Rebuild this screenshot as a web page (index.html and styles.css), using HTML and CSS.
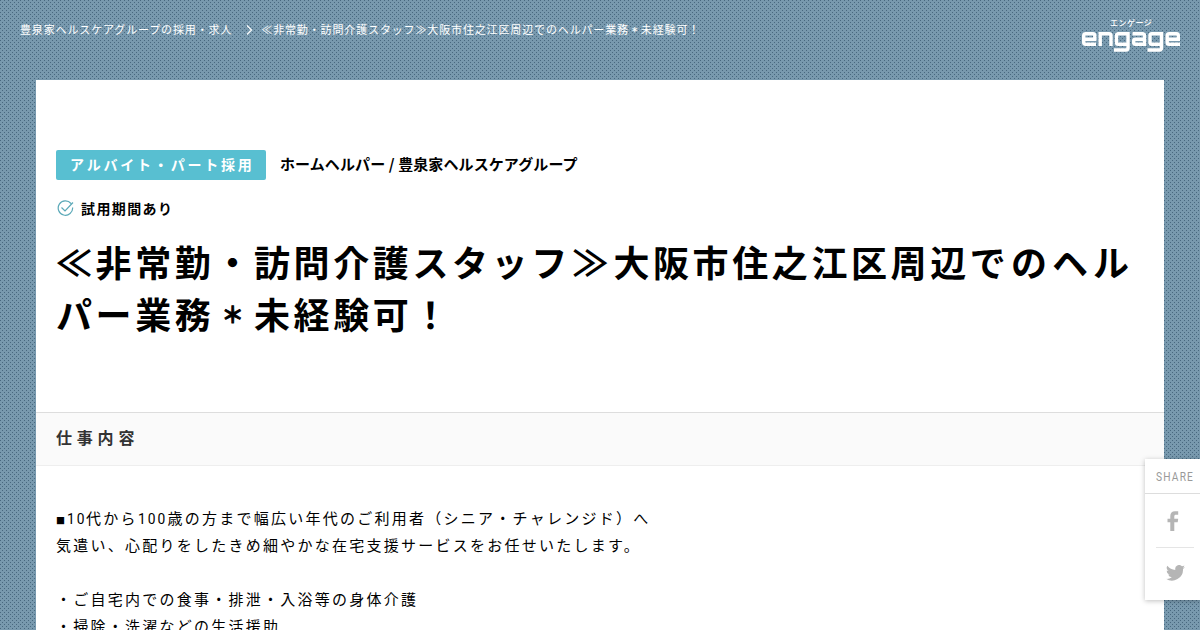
FILE: index.html
```
<!DOCTYPE html>
<html lang="ja">
<head>
  <meta charset="UTF-8">
  <title>≪非常勤・訪問介護スタッフ≫大阪市住之江区周辺でのヘルパー業務＊未経験可！</title>
  <link rel="stylesheet" href="styles.css">
</head>
<body>
  <header class="header">
    <ul class="breadcrumb">
      <li>豊泉家ヘルスケアグループの採用・求人</li>
      <li class="arrow"><svg width="7" height="10" viewBox="0 0 7 10"><path d="M1 .5L5.500 5L1 9.500"/></svg></li>
      <li>≪非常勤・訪問介護スタッフ≫大阪市住之江区周辺でのヘルパー業務<span class="ast">＊</span>未経験可！</li>
    </ul>
    <div class="logo">
      <span class="ruby">エンゲージ</span>
      <svg width="98" height="20" viewBox="0 0 98 20" role="img" aria-label="engage">
        <path d="M14 12.300H3.500Q1.700 12.300 1.700 10.500V3.500Q1.700 1.700 3.500 1.700H11Q12.800 1.700 12.800 3.500V7.300H1.700"/>
        <path d="M18.200 14V1.700H27Q29 1.700 29 3.700V14"/>
        <path d="M46 12.300H36.300Q34.500 12.300 34.500 10.500V3.500Q34.500 1.700 36.300 1.700H46V16Q46 18 44 18H32"/>
        <path d="M50.500 1.700H60.500Q62.500 1.700 62.500 3.500V12.300H53.500Q51.700 12.300 51.700 10.800V8.800Q51.700 7.300 53.500 7.300H62.500"/>
        <path d="M79.500 12.300H69.800Q68 12.300 68 10.500V3.500Q68 1.700 69.800 1.700H79.500V16Q79.500 18 77.500 18H65.500"/>
        <path d="M98 12.300H87Q85.200 12.300 85.200 10.500V3.500Q85.200 1.700 87 1.700H94.500Q96.300 1.700 96.300 3.500V7.300H85.200"/>
      </svg>
    </div>
  </header>
  <main class="content">
    <div class="job-head">
      <div class="job-type">
        <span class="label">アルバイト・パート採用</span>
        <span class="job-name">ホームヘルパー / 豊泉家ヘルスケアグループ</span>
      </div>
      <p class="trial">
        <svg width="17" height="17" viewBox="0 0 17 17"><path d="M14 3.500A7.200 7.200 0 1 0 15.600 7.500M4.500 7.500L8 11L16 2.500"/></svg>
        試用期間あり
      </p>
      <h1>≪非常勤・訪問介護スタッ<span class="wide">フ≫</span>大阪市住之江区周辺<span class="wide">でのヘル</span>パー業務<span class="ast">＊</span>未経験可！</h1>
    </div>
    <h2>仕事内容</h2>
    <p class="text"><span class="mark">■</span><span class="num">10</span>代から<span class="num">100</span>歳の方まで幅広い年代のご利用者（シニア・チャレンジド）へ<br>
    気遣い、心配りをしたきめ細やかな在宅支援サービスをお任せいたします。<br>
    <br>
    ・ご自宅内での食事・排泄・入浴等の身体介護<br>
    ・掃除・洗濯などの生活援助</p>
  </main>
  <aside class="share">
    <p class="share-title"><span>SHARE</span></p>
    <ul>
      <li class="facebook"><svg width="12" height="20" viewBox="0 0 12 20"><path d="M3.300 20V11.200H.5V7.700H3.300V5C3.300 1.900 5 .3 8 .3H11.200V3.700H9.200C7.700 3.700 7.300 4.300 7.300 5.500V7.700H11.200L10.700 11.200H7.300V20Z"/></svg></li>
      <li class="twitter"><svg width="19" height="16" viewBox="0 0 24 20"><path d="M24 2.400a9.800 9.800 0 0 1-2.800.8A5 5 0 0 0 23.300.4a9.800 9.800 0 0 1-3.100 1.200A4.900 4.900 0 0 0 11.800 6.100 14 14 0 0 1 1.700.9a4.900 4.900 0 0 0 1.500 6.600A4.900 4.900 0 0 1 1 6.900a4.900 4.900 0 0 0 3.900 4.900 4.900 4.900 0 0 1-2.200.1 4.900 4.900 0 0 0 4.600 3.400A9.900 9.900 0 0 1 0 17.400 14 14 0 0 0 21.500 5 10 10 0 0 0 24 2.400Z"/></svg></li>
    </ul>
  </aside>
</body>
</html>
```
FILE: styles.css
```
* {
  box-sizing: border-box;
}
html, body {
  margin: 0;
  padding: 0;
  height: 100%;
}
body {
  overflow: hidden;
  color: #000;
  font-family: "Noto Sans CJK JP", sans-serif;
  background-color: #7899ae;
  background-image:
    conic-gradient(from 0deg at 1px 1px, transparent 75%, #48687f 0),
    conic-gradient(from 0deg at 1px 1px, transparent 75%, #48687f 0);
  background-size: 4px 4px;
  background-position: 0 0, 2px 2px;
}
ul {
  list-style: none;
  margin: 0;
  padding: 0;
}
.header {
  display: flex;
  justify-content: space-between;
  height: 80px;
  padding: 0 20px;
  color: #fff;
}
.breadcrumb {
  display: flex;
  height: 57px;
  align-items: center;
  font-size: 11px;
  letter-spacing: .86px;
}
.breadcrumb .arrow {
  display: flex;
  margin: 2px 8px 0 14px;
}
.arrow svg {
  fill: none;
  stroke: #fff;
  stroke-width: 1.2;
}
.ast {
  display: inline-block;
  line-height: 1;
  transform: scale(.62);
  -webkit-text-stroke: .04em;
}
.logo {
  display: flex;
  flex-direction: column;
  width: 98px;
  padding-top: 18px;
}
.ruby {
  padding-left: 28px;
  font-size: 8px;
  font-weight: 500;
  line-height: 10px;
  letter-spacing: .5px;
  margin-bottom: 4px;
}
.logo svg {
  fill: none;
  stroke: #fff;
  stroke-width: 3.4;
}
.content {
  height: 550px;
  margin: 0 36px;
  background: #fff;
  overflow: hidden;
}
.job-head {
  height: 332px;
  padding: 70px 20px 0;
}
.job-type {
  display: flex;
  height: 30px;
  line-height: 28px;
}
.label {
  width: 210px;
  padding-left: 14px;
  border-radius: 2px;
  background: #58bfd1;
  color: #fff;
  font-size: 14px;
  font-weight: bold;
  letter-spacing: 2.8px;
  white-space: nowrap;
}
.job-name {
  margin-left: 14px;
  font-size: 15px;
  font-weight: bold;
  letter-spacing: .1px;
}
.trial {
  display: flex;
  align-items: center;
  height: 20px;
  margin: 18px 0 0;
  padding-left: 1px;
  font-size: 14px;
  font-weight: bold;
  letter-spacing: 1.4px;
}
.trial svg {
  margin-right: 7px;
  fill: none;
  stroke: #5ba9b8;
  stroke-width: 1.2;
}
h1 {
  margin: 17px -12px 0 0;
  font-size: 36px;
  line-height: 52px;
  letter-spacing: 3.6px;
}
h1 .wide {
  letter-spacing: 5.1px;
}
h2 {
  height: 54px;
  margin: 0;
  padding-left: 20px;
  border-top: 1px solid #ddd;
  border-bottom: 1px solid #eee;
  background: #fafafa;
  color: #333;
  font-size: 16px;
  line-height: 49px;
  letter-spacing: 4.8px;
}
.text {
  margin: 0;
  padding: 38px 20px 0;
  font-size: 15px;
  line-height: 27px;
  letter-spacing: 2.25px;
}
.mark {
  font-size: 9px;
  line-height: 1;
  letter-spacing: 1.8px;
}
.num {
  display: inline-block;
  margin-right: -.14em;
  font-family: Roboto, sans-serif;
  line-height: 1;
  letter-spacing: 2.2px;
  transform: scaleX(.92);
  transform-origin: left;
}
.share {
  position: absolute;
  right: 0;
  top: 459px;
  width: 55px;
  height: 141px;
  background: #fff;
  box-shadow: 0 1px 5px rgba(0, 0, 0, .25);
}
.share-title {
  height: 35px;
  margin: 0;
  padding-left: 11px;
  border-bottom: 1px solid #ddd;
  color: #999;
  font: 12px/36px Roboto, sans-serif;
  letter-spacing: 1.4px;
}
.share-title span {
  display: inline-block;
  transform: scaleX(.85);
  transform-origin: left;
}
.share li {
  display: flex;
  align-items: center;
  justify-content: center;
  height: 53px;
  margin: 0 6px 0 11px;
}
.share .facebook {
  padding-right: 5px;
}
.share .twitter {
  height: 51px;
  border-top: 1px solid #e5e5e5;
}
.share svg {
  fill: #b5b5b5;
}
```
